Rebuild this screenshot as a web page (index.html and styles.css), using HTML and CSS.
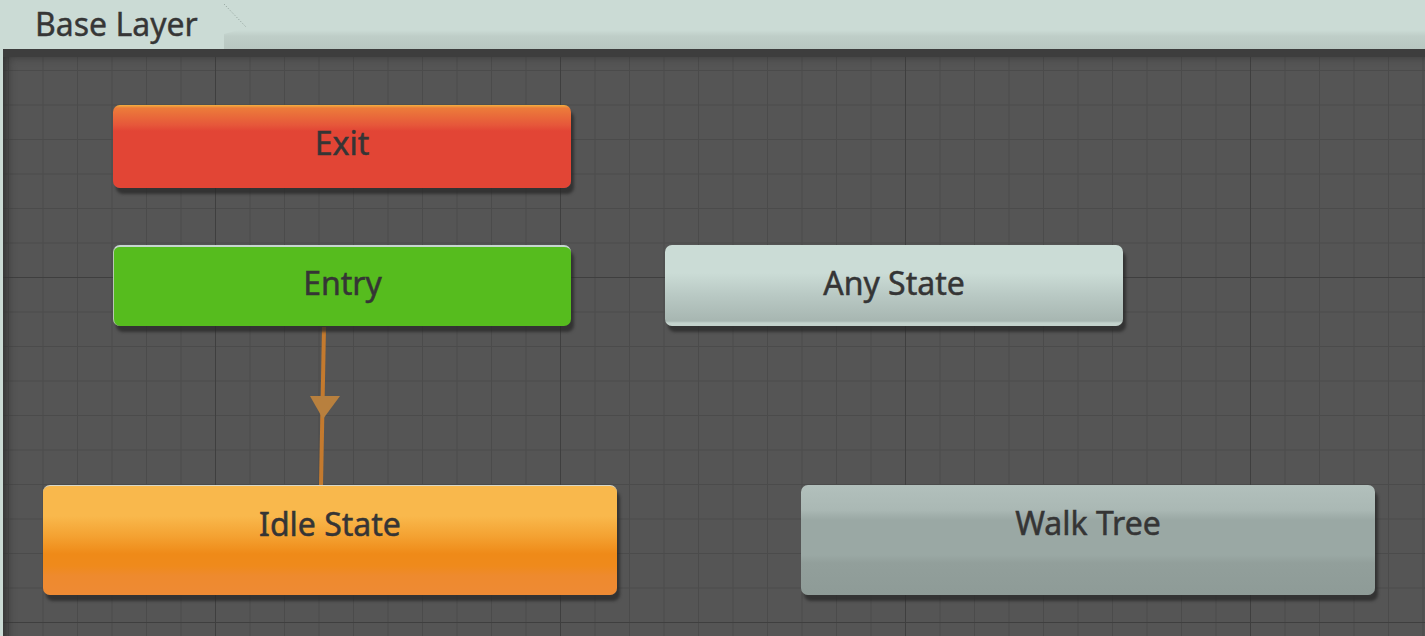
FILE: index.html
```html
<!DOCTYPE html>
<html>
<head>
<meta charset="utf-8">
<link rel="stylesheet" href="styles.css">
</head>
<body>
<div class="window">
  <div class="toolbar">
    <div class="tab">
      <span class="tab-label">Base Layer</span>
      <svg class="tab-edge" width="30" height="32" viewBox="0 0 30 32"><path d="M2 4 L24 27" stroke="#8b9b95" stroke-width="1" stroke-dasharray="1 2" fill="none"/></svg>
    </div>
    <div class="toolbar-fill"></div>
  </div>
  <div class="canvas">
    <div class="grid"></div>
    <svg class="edge" width="1422" height="587" viewBox="0 0 1422 587">
      <line x1="321" y1="278" x2="318" y2="436" stroke="#c47a2e" stroke-width="4"/>
      <polygon points="307,347 337,347 320,370" fill="#b8803e"/>
    </svg>
    <div class="node node-exit">Exit</div>
    <div class="node node-entry">Entry</div>
    <div class="node node-any">Any State</div>
    <div class="node node-idle">Idle State</div>
    <div class="node node-walk">Walk Tree</div>
  </div>
</div>
</body>
</html>
```
FILE: styles.css
```css
html, body {
  margin: 0;
  padding: 0;
  width: 1425px;
  height: 636px;
  overflow: hidden;
  background: #cbdbd5;
  font-family: "Noto Sans", "DejaVu Sans", sans-serif;
}

.window {
  display: flex;
  flex-direction: column;
  height: 636px;
}

.toolbar {
  display: flex;
  height: 49px;
  flex: none;
  background: #cbdbd5;
}

.tab {
  position: relative;
  width: 224px;
  flex: none;
  padding: 4px 0 0 35px;
  box-sizing: border-box;
}

.tab-label {
  font-size: 32px;
  line-height: 40px;
  color: #363636;
  -webkit-text-stroke: 0.4px #363636;
}

.tab-edge {
  position: absolute;
  left: 222px;
  top: 0;
}

.toolbar-fill {
  flex: 1;
  background: linear-gradient(to bottom, #cbdbd5 0, #cbdbd5 30px, #bfcec8 36px, #b8c7c1 49px);
  clip-path: polygon(22px 28px, 100% 28px, 100% 100%, 0 100%, 0 34px);
}

.canvas {
  position: relative;
  flex: 1;
  margin-left: 3px;
  background: #555555;
  overflow: hidden;
}

.grid {
  position: absolute;
  inset: 0;
  background-image:
    linear-gradient(to right, #3f3f3f 1px, transparent 1px),
    linear-gradient(to bottom, #3f3f3f 1px, transparent 1px),
    linear-gradient(to right, #4b4b4b 1px, transparent 1px),
    linear-gradient(to bottom, #4b4b4b 1px, transparent 1px);
  background-size: 345px 345px, 345px 345px, 34.5px 34.5px, 34.5px 34.5px;
  background-position: 212px 0, 0 228px, 5px 0, 0 21px;
  box-shadow: inset 6px 9px 10px -2px #333333;
}

.grid::before {
  content: "";
  position: absolute;
  left: 0;
  right: 0;
  top: 0;
  height: 8px;
  background: #3d3d3d;
}

.edge {
  position: absolute;
  left: 0;
  top: 0;
}

.node {
  position: absolute;
  box-sizing: border-box;
  border-radius: 7px;
  padding-top: 18px;
  text-align: center;
  font-size: 32px;
  line-height: 40px;
  color: #353535;
  -webkit-text-stroke: 0.5px #353535;
  box-shadow: 3px 6px 3px rgba(40, 40, 40, 0.75);
}

.node-exit {
  left: 110px;
  top: 56px;
  width: 458px;
  height: 83px;
  background: linear-gradient(to bottom, #f4b040 0, #ec7c3a 3px, #e6573a 20px, #e24535 26px, #e24535 100%);
}

.node-entry {
  left: 110px;
  top: 196px;
  width: 458px;
  height: 81px;
  background: #56bc1e;
  border-top: 2px solid #c6d6cf;
  border-left: 1px solid #b6c9b0;
  padding-top: 16px;
}

.node-any {
  left: 662px;
  top: 196px;
  width: 458px;
  height: 81px;
  background: linear-gradient(to bottom, #cbdcd6 0, #cbdcd6 28px, #b9c9c4 50px, #a7b6b1 76px, #c3d2cc 78px, #c3d2cc 100%);
}

.node-idle {
  left: 40px;
  top: 436px;
  width: 574px;
  height: 110px;
  background: linear-gradient(to bottom, #f9b84c 0, #f9b84c 30px, #f4a232 50px, #ef8a18 68px, #ef8a1c 80px, #ee8a2e 90px, #ee8a34 100%);
  border-top: 1px solid #d8d8c8;
}

.node-walk {
  left: 798px;
  top: 436px;
  width: 574px;
  height: 110px;
  background: linear-gradient(to bottom, #b2c0bc 0, #aab8b4 25px, #9aa8a4 35px, #9aa8a4 70px, #929f9b 78px, #8e9b97 100%);
}
```
